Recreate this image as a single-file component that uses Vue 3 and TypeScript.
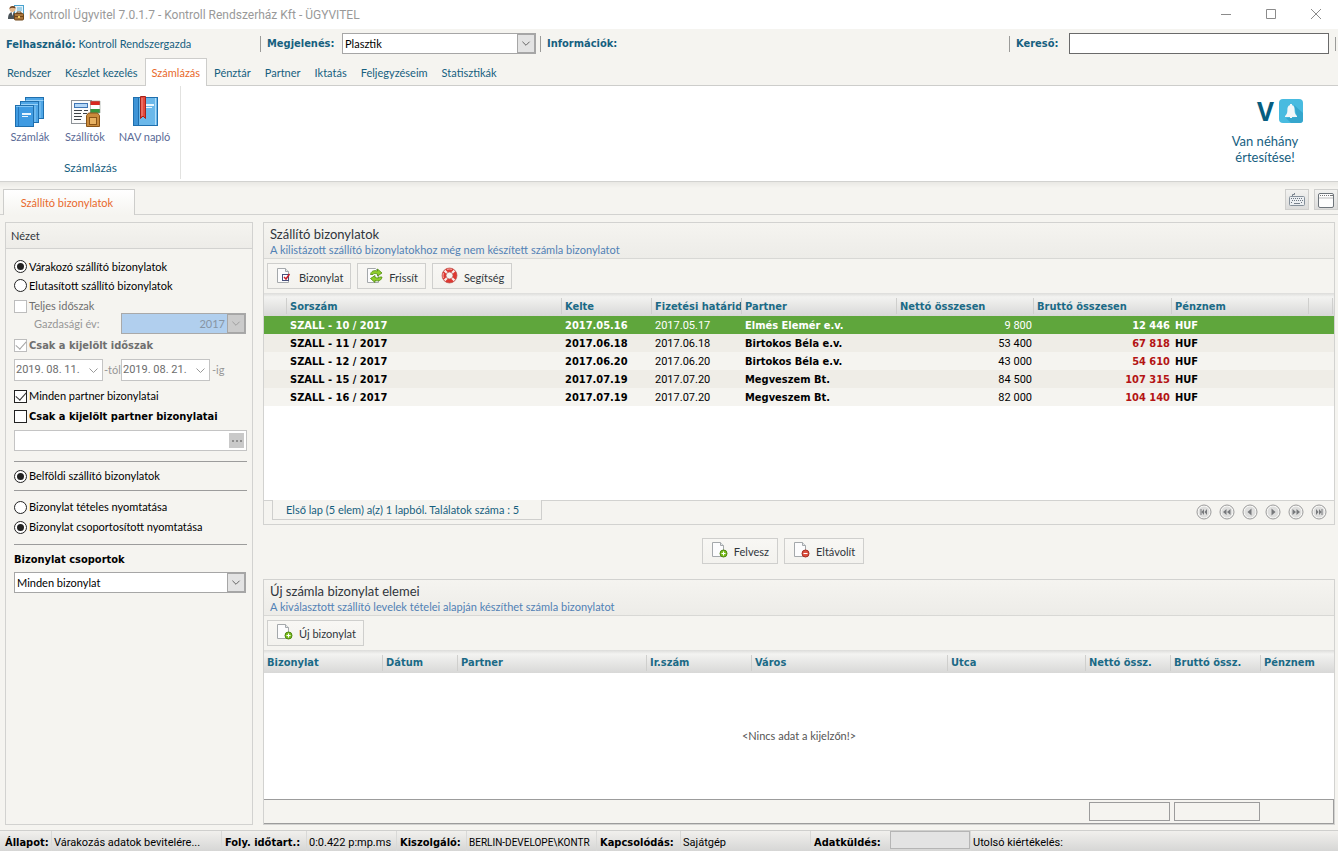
<script setup lang="ts">
import { ref } from 'vue'

interface DeliveryNote {
  serial: string
  issued: string
  due: string
  partner: string
  net: string
  gross: string
  currency: string
}

const menuTabs: string[] = ['Rendszer', 'Készlet kezelés', 'Számlázás', 'Pénztár', 'Partner', 'Iktatás', 'Feljegyzéseim', 'Statisztikák']
const activeTab = ref('Számlázás')
const theme = ref('Plasztik')
const search = ref('')

const listMode = ref('waiting')
const wholePeriod = ref(false)
const chosenPeriod = ref(true)
const allPartners = ref(true)
const chosenPartner = ref(false)
const origin = ref('domestic')
const printMode = ref('grouped')
const dateFrom = ref('2019. 08. 11.')
const dateTo = ref('2019. 08. 21.')
const partnerName = ref('')

const notes: DeliveryNote[] = [
  { serial: 'SZALL - 10 / 2017', issued: '2017.05.16', due: '2017.05.17', partner: 'Elmés Elemér e.v.', net: '9 800', gross: '12 446', currency: 'HUF' },
  { serial: 'SZALL - 11 / 2017', issued: '2017.06.18', due: '2017.06.18', partner: 'Birtokos Béla e.v.', net: '53 400', gross: '67 818', currency: 'HUF' },
  { serial: 'SZALL - 12 / 2017', issued: '2017.06.20', due: '2017.06.20', partner: 'Birtokos Béla e.v.', net: '43 000', gross: '54 610', currency: 'HUF' },
  { serial: 'SZALL - 15 / 2017', issued: '2017.07.19', due: '2017.07.20', partner: 'Megveszem Bt.', net: '84 500', gross: '107 315', currency: 'HUF' },
  { serial: 'SZALL - 16 / 2017', issued: '2017.07.19', due: '2017.07.20', partner: 'Megveszem Bt.', net: '82 000', gross: '104 140', currency: 'HUF' },
]
const selectedRow = ref(0)

const itemColumns: string[] = ['Bizonylat', 'Dátum', 'Partner', 'Ir.szám', 'Város', 'Utca', 'Nettó össz.', 'Bruttó össz.', 'Pénznem']

const pagerButtons = [
  { label: 'Első', path: 'M4.500 5h1v6h-1zM8 5v6L5.500 8zM11 5v6L8.500 8z' },
  { label: 'Vissza lapoz', path: 'M7.500 5v6L4 8zM11.500 5v6L8 8z' },
  { label: 'Előző', path: 'M9.500 4.500v7L5.500 8z' },
  { label: 'Következő', path: 'M6.500 4.500v7l4-3.500z' },
  { label: 'Előre lapoz', path: 'M4.500 5v6L8 8zM8.500 5v6L12 8z' },
  { label: 'Utolsó', path: 'M5 5v6l2.500-3zM8 5v6l2.500-3zM10.500 5h1v6h-1z' },
]
</script>

<template>
  <div class="app">
    <header class="titlebar">
      <svg class="app-icon" viewBox="0 0 16 16" aria-hidden="true">
        <rect x="6.500" y=".5" width="9" height="10" fill="#e8f3fa" stroke="#4aa3cf" />
        <path d="M9 3h5M9 5h5" stroke="#5bb0d6" />
        <circle cx="4.500" cy="4" r="3" fill="#e8b98a" />
        <path d="M1.500 4C1 .5 8 0 7.500 3.500 5 2.500 3 2.500 1.500 4z" fill="#6b4424" />
        <path d="M0 14c0-5 2-7 4.500-7S8 9 8 14z" fill="#4b5359" />
        <path d="M3.500 7h2l-1 4z" fill="#fff" />
        <rect x="6.500" y="8.500" width="9" height="6.500" rx="1" fill="#a9743b" stroke="#6f4718" />
        <path d="M9 8.500V7h4v1.500M7 11.500h8" stroke="#6f4718" fill="none" />
        <rect x="10" y="11" width="2" height="2" fill="#f2cc5e" />
      </svg>
      <h1>Kontroll Ügyvitel 7.0.1.7 - Kontroll Rendszerház Kft - ÜGYVITEL</h1>
      <div class="window-buttons">
        <button type="button" aria-label="Kis méret"><svg viewBox="0 0 12 12"><path d="M1 6.500h10" /></svg></button>
        <button type="button" aria-label="Teljes méret"><svg viewBox="0 0 12 12"><path d="M1.500 1.500h9v9h-9z" /></svg></button>
        <button type="button" aria-label="Bezárás"><svg viewBox="0 0 12 12"><path d="M1 1l10 10M11 1L1 11" /></svg></button>
      </div>
    </header>

    <div class="infobar">
      <div class="info-user"><b>Felhasználó:</b> <span>Kontroll Rendszergazda</span></div>
      <label class="divided info-theme" for="theme">Megjelenés:</label>
      <div class="combo theme-combo">
        <select id="theme" v-model="theme"><option>Plasztik</option></select>
        <svg viewBox="0 0 17 19" aria-hidden="true"><path d="M4.500 7.500l4 4 4-4" /></svg>
      </div>
      <b class="divided info-news">Információk:</b>
      <label class="divided info-search" for="search">Kereső:</label>
      <input id="search" v-model="search" class="search" type="text" />
      <span class="end-mark"></span>
    </div>

    <nav class="menu">
      <button v-for="tab in menuTabs" :key="tab" type="button" :class="{ active: tab === activeTab }" @click="activeTab = tab">{{ tab }}</button>
    </nav>

    <section class="ribbon">
      <div class="ribbon-group">
        <div class="ribbon-items">
          <button type="button" class="item-a">
            <svg viewBox="0 0 32 32" aria-hidden="true">
              <g stroke="#1f6fae">
                <rect x="11.500" y="1.500" width="18" height="21" fill="#4fa6e6" />
                <path d="M11.500 4.500h18" stroke="#9ad2f8" /><path d="M26 6v16" stroke="#8bcaf6" />
                <rect x="6.500" y="5.500" width="18" height="21" fill="#4fa6e6" />
                <path d="M7 8.500h17" stroke="#9ad2f8" /><path d="M21 10v16" stroke="#8bcaf6" />
                <rect x="1.500" y="9.500" width="18" height="21" fill="#3f9be2" />
                <path d="M4.500 10v20" stroke="#2678bd" /><path d="M2 10.500h17" stroke="#83c7f6" />
              </g>
              <path d="M8 17h9v2H8zM8 20h6v1H8z" fill="#e9f6ff" />
            </svg>
            Számlák
          </button>
          <button type="button" class="item-b">
            <svg viewBox="0 0 32 32" aria-hidden="true">
              <rect x="2.500" y="4.500" width="20" height="23" fill="#fbfbfb" stroke="#8d9297" />
              <rect x="5.500" y="7.500" width="13" height="4" fill="#b4d7f7" stroke="#4076b4" />
              <path d="M5 14.500h8M5 17.500h7M5 20.500h8M5 23.500h7M15 14.500h4M14 17.500h4" stroke="#3e4348" />
              <path d="M21 5h10v4H21z" fill="#d8281f" /><path d="M21 9h10v4H21z" fill="#fff" /><path d="M21 13h10v4H21z" fill="#35963f" />
              <path d="M21.500 5v12h9.500V5z" fill="none" stroke="#8b958b" stroke-width=".6" />
              <path d="M17.500 19.500l2-2.500h9l2 2.500v11h-13z" fill="#c98b3c" stroke="#8a5518" />
              <rect x="20.500" y="21.500" width="7" height="7" fill="#e8b263" stroke="#8a5518" />
            </svg>
            Szállítók
          </button>
          <button type="button" class="item-c">
            <svg viewBox="0 0 32 32" aria-hidden="true">
              <rect x="4.500" y="1.500" width="24" height="28" fill="#6bb8ea" stroke="#1f6fae" />
              <path d="M5 2h4v27H5z" fill="#3f94d6" /><path d="M9.500 2v27" stroke="#1f6fae" /><path d="M26.500 2v27" stroke="#b3def9" />
              <path d="M17 8h8v2h-8zM17 11h6v1h-6z" fill="#e9f6ff" />
              <path d="M11.500.5h5v22l-2.500-2.500-2.500 2.500z" fill="#e2493d" stroke="#a82219" />
              <path d="M13 2v18" stroke="#f59086" />
            </svg>
            NAV napló
          </button>
        </div>
        <div class="ribbon-caption">Számlázás</div>
      </div>
      <div class="notice">
        <div class="notice-icons">
          <strong>V</strong>
          <svg viewBox="0 0 24 24" aria-hidden="true">
            <rect width="24" height="24" rx="4" fill="#48bbe0" />
            <path d="M18 18l-3-12 9 8v7a3 3 0 0 1-3 3h-9l-5-5z" fill="#35a6cd" />
            <path d="M12 6c2.800 0 3.600 2.200 3.600 5 0 3.500.9 4.500 2.400 6v1H6v-1c1.500-1.500 2.400-2.500 2.400-6 0-2.800.8-5 3.600-5z" fill="#f2f7f9" />
            <path d="M11 5.500h2M11 18.500h2" stroke="#f2f7f9" />
          </svg>
        </div>
        <p>Van néhány<br />értesítése!</p>
      </div>
    </section>

    <div class="doc-tabs">
      <button type="button" class="doc-tab">Szállító bizonylatok</button>
      <div class="doc-tools">
        <button type="button" aria-label="Billentyűzet">
          <svg viewBox="0 0 18 16" aria-hidden="true">
            <rect x="1.500" y="4.500" width="15" height="9" rx="1" fill="#eceff2" stroke="#85909b" />
            <path d="M4.500 4V2.500h2V1" stroke="#77818c" fill="none" />
            <path d="M3 6.500h12M4 8.500h11M3 10.500h2M13 10.500h2" stroke="#6d7883" stroke-dasharray="1 1" /><path d="M6 11.500h6" stroke="#77818c" />
          </svg>
        </button>
        <button type="button" aria-label="Ablak">
          <svg viewBox="0 0 18 16" aria-hidden="true">
            <rect x="1.500" y="1.500" width="15" height="14" rx="1.500" fill="#fdfdfd" stroke="#6d747a" />
            <path d="M3 3.500h9" stroke="#777" stroke-dasharray="1 1" /><path d="M13 3.500h3" stroke="#777" /><path d="M2 6h14" stroke="#ddd" stroke-width="2" />
          </svg>
        </button>
      </div>
    </div>

    <main class="workspace">
      <aside class="panel side">
        <h2>Nézet</h2>
        <form class="filters" @submit.prevent>
          <label class="choice h19"><input v-model="listMode" type="radio" name="list" value="waiting" />Várakozó szállító bizonylatok</label>
          <label class="choice h19"><input v-model="listMode" type="radio" name="list" value="rejected" />Elutasított szállító bizonylatok</label>
          <label class="choice whole muted"><input v-model="wholePeriod" type="checkbox" disabled />Teljes időszak</label>
          <div class="year-row">
            <label for="year">Gazdasági év:</label>
            <div class="combo year-combo">
              <select id="year" disabled><option>2017</option></select>
              <svg viewBox="0 0 17 19" aria-hidden="true"><path d="M4.500 7.500l4 4 4-4" /></svg>
            </div>
          </div>
          <label class="choice period muted bold"><input v-model="chosenPeriod" type="checkbox" disabled />Csak a kijelölt időszak</label>
          <div class="dates">
            <div class="date"><input v-model="dateFrom" type="text" aria-label="Kezdő dátum" disabled /><svg viewBox="0 0 17 19" aria-hidden="true"><path d="M4.500 7.500l4 4 4-4" /></svg></div>
            <span class="suffix">-tól</span>
            <div class="date"><input v-model="dateTo" type="text" aria-label="Záró dátum" disabled /><svg viewBox="0 0 17 19" aria-hidden="true"><path d="M4.500 7.500l4 4 4-4" /></svg></div>
            <span>-ig</span>
          </div>
          <label class="choice partners"><input v-model="allPartners" type="checkbox" />Minden partner bizonylatai</label>
          <label class="choice bold h21"><input v-model="chosenPartner" type="checkbox" />Csak a kijelölt partner bizonylatai</label>
          <div class="picker">
            <input v-model="partnerName" type="text" aria-label="Partner" />
            <button type="button" aria-label="Partner választása"><i></i><i></i><i></i></button>
          </div>
          <hr class="first" />
          <label class="choice h28"><input v-model="origin" type="radio" name="origin" value="domestic" />Belföldi szállító bizonylatok</label>
          <hr />
          <label class="choice h20 spaced"><input v-model="printMode" type="radio" name="print" value="detailed" />Bizonylat tételes nyomtatása</label>
          <label class="choice h20"><input v-model="printMode" type="radio" name="print" value="grouped" />Bizonylat csoportosított nyomtatása</label>
          <hr class="last" />
          <label class="group-label" for="group">Bizonylat csoportok</label>
          <div class="combo group-combo">
            <select id="group"><option>Minden bizonylat</option></select>
            <svg viewBox="0 0 17 19" aria-hidden="true"><path d="M4.500 7.500l4 4 4-4" /></svg>
          </div>
        </form>
      </aside>

      <div class="content">
        <section class="panel">
          <header class="panel-head">
            <h2>Szállító bizonylatok</h2>
            <p>A kilistázott szállító bizonylatokhoz még nem készített számla bizonylatot</p>
          </header>
          <div class="toolbar">
            <button type="button">
              <svg viewBox="0 0 18 18" aria-hidden="true">
                <path d="M1.500 1.500h8l3 3v11h-11z" fill="#fcfcfd" stroke="#a4a8ab" /><path d="M9.500 1.500v3h3" fill="#e3e7ea" stroke="#a4a8ab" />
                <rect x="6.500" y="7.500" width="6" height="6" fill="#fff" stroke="#48517c" /><path d="M8 10l2 2 3.500-5" fill="none" stroke="#c71f2d" stroke-width="1.500" />
              </svg>
              Bizonylat
            </button>
            <button type="button">
              <svg viewBox="0 0 18 18" aria-hidden="true">
                <path d="M1.500 1.500h8l3 3v11h-11z" fill="#fcfcfd" stroke="#a4a8ab" />
                <g fill="#8fce2b" stroke="#4f8a0c" stroke-width=".8">
                  <path d="M4.500 7.500C5 4 8 3 11.500 4V2l4.500 4-4.500 3V7C9 6.200 7.500 6.500 7 7.500z" />
                  <path d="M16 10c-.5 3.500-3.500 4.500-7 3.500v2l-4.500-4L9 8.500v2c2.500.8 4 .5 4.500-.5z" />
                </g>
              </svg>
              Frissít
            </button>
            <button type="button">
              <svg viewBox="0 0 18 18" aria-hidden="true">
                <circle cx="8.500" cy="8.500" r="5.500" fill="none" stroke="#df3831" stroke-width="4" />
                <path d="M3.500 3.500l2.800 2.800M13.500 3.500l-2.800 2.800M3.500 13.500l2.800-2.800M13.500 13.500l-2.800-2.800" stroke="#fbe9e8" stroke-width="2.200" />
                <circle cx="8.500" cy="8.500" r="7.500" fill="none" stroke="#b5544f" stroke-width=".7" /><circle cx="8.500" cy="8.500" r="3.500" fill="none" stroke="#b5544f" stroke-width=".7" />
                <path d="M6 2.500q2.500-1 5 0M2.500 6q-1 2.500 0 5" fill="none" stroke="#f7a09b" stroke-width="1.200" />
              </svg>
              Segítség
            </button>
          </div>
          <div class="grid-area">
            <table>
              <colgroup><col class="w22" /><col /><col class="w90" /><col class="w90" /><col class="w155" /><col class="w137" /><col class="w138" /><col class="w137" /><col class="w24" /><col class="w2" /></colgroup>
              <thead>
                <tr><th></th><th>Sorszám</th><th>Kelte</th><th>Fizetési határid</th><th>Partner</th><th>Nettó összesen</th><th>Bruttó összesen</th><th>Pénznem</th><th></th><th></th></tr>
              </thead>
              <tbody>
                <tr v-for="(note, i) in notes" :key="note.serial" :class="{ selected: i === selectedRow }" @click="selectedRow = i">
                  <td></td>
                  <td class="bold">{{ note.serial }}</td>
                  <td class="bold">{{ note.issued }}</td>
                  <td>{{ note.due }}</td>
                  <td class="bold">{{ note.partner }}</td>
                  <td class="num">{{ note.net }}</td>
                  <td class="num bold gross">{{ note.gross }}</td>
                  <td class="bold">{{ note.currency }}</td>
                  <td></td>
                  <td></td>
                </tr>
              </tbody>
            </table>
          </div>
          <footer class="pager">
            <span class="pager-info">Első lap (5 elem) a(z) 1 lapból. Találatok száma : 5</span>
            <div class="pager-buttons">
              <button v-for="b in pagerButtons" :key="b.label" type="button" :aria-label="b.label">
                <svg viewBox="0 0 16 16" aria-hidden="true">
                  <circle cx="8" cy="8" r="7" fill="#f8f8f6" stroke="#9a9a9a" /><circle cx="8" cy="8" r="5.500" fill="#dededd" />
                  <path :d="b.path" fill="#77797c" />
                </svg>
              </button>
            </div>
          </footer>
        </section>

        <div class="transfer">
          <button type="button" class="tool">
            <svg viewBox="0 0 18 18" aria-hidden="true">
              <path d="M1.500 1.500h8l3 3v11h-11z" fill="#fcfcfd" stroke="#a4a8ab" /><path d="M9.500 1.500v3h3" fill="#e3e7ea" stroke="#a4a8ab" />
              <circle cx="12.500" cy="12.500" r="3.500" fill="#7cc01d" stroke="#4d8410" /><path d="M10.500 12.500h4M12.500 10.500v4" stroke="#fff" />
            </svg>
            Felvesz
          </button>
          <button type="button" class="tool">
            <svg viewBox="0 0 18 18" aria-hidden="true">
              <path d="M1.500 1.500h8l3 3v11h-11z" fill="#fcfcfd" stroke="#a4a8ab" /><path d="M9.500 1.500v3h3" fill="#e3e7ea" stroke="#a4a8ab" />
              <circle cx="12.500" cy="12.500" r="3.500" fill="#dd5040" stroke="#a32b1f" /><path d="M10.500 12.500h4" stroke="#fff" />
            </svg>
            Eltávolít
          </button>
        </div>

        <section class="panel">
          <header class="panel-head">
            <h2>Új számla bizonylat elemei</h2>
            <p>A kiválasztott szállító levelek tételei alapján készíthet számla bizonylatot</p>
          </header>
          <div class="toolbar">
            <button type="button">
              <svg viewBox="0 0 18 18" aria-hidden="true">
                <path d="M1.500 1.500h8l3 3v11h-11z" fill="#fcfcfd" stroke="#a4a8ab" /><path d="M9.500 1.500v3h3" fill="#e3e7ea" stroke="#a4a8ab" />
                <circle cx="12.500" cy="12.500" r="3.500" fill="#7cc01d" stroke="#4d8410" /><path d="M10.500 12.500h4M12.500 10.500v4" stroke="#fff" />
              </svg>
              Új bizonylat
            </button>
          </div>
          <div class="grid-area empty">
            <table class="items">
              <colgroup><col class="w118" /><col class="w75" /><col /><col class="w105" /><col class="w196" /><col class="w138" /><col class="w85" /><col class="w90" /><col class="w74" /></colgroup>
              <thead>
                <tr><th v-for="c in itemColumns" :key="c">{{ c }}</th></tr>
              </thead>
            </table>
            <p>&lt;Nincs adat a kijelzőn!&gt;</p>
          </div>
          <footer class="totals"><output class="net" aria-label="Nettó össz."></output><output class="sum" aria-label="Bruttó össz."></output></footer>
        </section>
      </div>
    </main>

    <footer class="statusbar">
      <b>Állapot:</b><span>Várakozás adatok bevitelére...</span>
      <b>Foly. időtart.:</b><span>0:0.422 p:mp.ms</span>
      <b>Kiszolgáló:</b><span class="server">BERLIN-DEVELOPE\KONTR</span>
      <b>Kapcsolódás:</b><span>Sajátgép</span>
      <b class="sending">Adatküldés:<i></i></b><span>Utolsó kiértékelés:</span>
    </footer>
  </div>
</template>

<style>
body {
  margin: 0;
}
</style>

<style scoped>
* {
  box-sizing: border-box;
}
.app {
  display: flex;
  flex-direction: column;
  height: 100vh;
  min-height: 680px;
  overflow: hidden;
  background: #f5f4f0;
  color: #000;
  font: 11px/14px Lato, Roboto, sans-serif;
}
b, label.divided, .bold, th, .group-label {
  font-family: 'DejaVu Sans Condensed', 'DejaVu Sans', sans-serif;
  font-weight: 700;
}
button, input, select {
  margin: 0;
  padding: 0;
  border: 0;
  border-radius: 0;
  background: none;
  color: inherit;
  font: inherit;
}
h1, h2, p {
  margin: 0;
  font-weight: 400;
}
svg {
  display: block;
}

.titlebar {
  display: flex;
  align-items: center;
  flex: none;
  height: 29px;
  padding-left: 8px;
  background: #fff;
  color: #999;
}
.app-icon {
  width: 16px;
  height: 16px;
  margin-bottom: 3px;
}
h1 {
  flex: 1;
  padding-left: 5px;
  font-family: Roboto, sans-serif;
  font-size: 12px;
  line-height: 26px;
}
.window-buttons {
  display: flex;
}
.window-buttons button {
  display: grid;
  place-items: center;
  width: 45px;
  height: 28px;
}
.window-buttons svg {
  width: 12px;
  height: 12px;
  margin-bottom: 2px;
  fill: none;
  stroke: #8b8b8b;
}

.infobar {
  display: flex;
  align-items: center;
  flex: none;
  height: 29px;
  padding-left: 6px;
  color: #16607f;
  line-height: 15px;
}
.info-user {
  width: 254px;
}
.divided {
  padding-left: 6px;
  border-left: 1px solid #9b9b99;
  line-height: 16px;
}
.info-theme {
  width: 82px;
}
.info-news {
  flex: 1;
  margin-left: 4px;
}
.info-search {
  width: 60px;
}
.search {
  width: 260px;
  height: 21px;
  border: 1px solid #6a6a6a;
  background: #fff;
}
.end-mark {
  width: 3px;
  height: 14px;
  margin-left: 6px;
  border-left: 1px solid #9b9b99;
}

.combo {
  display: grid;
  grid-template-columns: 1fr 18px;
  height: 21px;
  border: 1px solid #a6a6a6;
  background: #fff;
  color: #000;
}
.combo select {
  grid-area: 1 / 1 / 2 / 3;
  width: 100%;
  height: 19px;
  padding-left: 2px;
  appearance: none;
}
.combo svg {
  grid-area: 1 / 2;
  width: 18px;
  height: 19px;
  border: 1px solid #a6a6a6;
  background: #e3e3e3;
  pointer-events: none;
}
.combo path, .date path {
  fill: none;
  stroke: #555;
}
.theme-combo {
  width: 194px;
}

.menu {
  display: flex;
  flex: none;
  height: 28px;
  border-bottom: 1px solid #cdcdcb;
}
.menu button {
  height: 28px;
  padding: 0 6px;
  border: 1px solid transparent;
  border-bottom: 0;
  color: #16607f;
  white-space: nowrap;
}
.menu .active {
  border-color: #cdcdcb;
  background: #fff;
  color: #e8692c;
}

.ribbon {
  display: flex;
  flex: none;
  justify-content: space-between;
  height: 96px;
  padding-right: 35px;
  border-bottom: 1px solid #d2d2d0;
  background: #fff;
}
.ribbon-group {
  display: flex;
  flex-direction: column;
  width: 181px;
  margin-bottom: 2px;
  padding-left: 1px;
  border-right: 1px solid #e2e2e0;
}
.ribbon-items {
  display: flex;
  height: 74px;
  padding-top: 10px;
}
.ribbon-items button {
  display: flex;
  flex-direction: column;
  align-items: center;
  gap: 2px;
  height: 50px;
  color: #5a6a96;
}
.ribbon-items svg {
  width: 32px;
  height: 32px;
}
.item-a {
  width: 58px;
}
.item-b {
  width: 52px;
}
.item-c {
  width: 67px;
}
.ribbon-caption {
  color: #16607f;
  font-size: 12px;
  line-height: 16px;
  text-align: center;
}
.notice {
  width: 76px;
  padding-top: 13px;
  color: #16607f;
  font-size: 13px;
  line-height: 16px;
  text-align: center;
}
.notice-icons {
  display: flex;
  justify-content: flex-end;
  align-items: center;
  gap: 5px;
  margin-bottom: 10px;
}
.notice strong {
  color: #065d80;
  font-family: 'Noto Sans', sans-serif;
  font-size: 26px;
  line-height: 24px;
}
.notice svg {
  width: 24px;
  height: 24px;
}

.doc-tabs {
  display: flex;
  flex: none;
  justify-content: space-between;
  height: 33px;
  padding: 7px 0 0 3px;
  border-bottom: 1px solid #d2d2d0;
  background: linear-gradient(#e9e8e4, #f5f4f0 6px);
}
.doc-tab {
  width: 132px;
  height: 26px;
  padding-right: 4px;
  border: 1px solid #cdcdcb;
  border-bottom: 0;
  background: linear-gradient(#fff, #f5f4f0);
  color: #e8692c;
}
.doc-tools {
  display: flex;
  gap: 5px;
}
.doc-tools button {
  display: grid;
  place-items: center;
  width: 24px;
  height: 21px;
  border: 1px solid #cfcfcd;
  background: linear-gradient(#f2f2f0, #dcdcdb);
}
.doc-tools svg {
  width: 18px;
  height: 16px;
}

.workspace {
  display: grid;
  flex: 1;
  grid-template-columns: 248px minmax(0, 1fr);
  gap: 10px;
  min-height: 0;
  padding: 7px 3px 5px 5px;
}
.panel {
  display: flex;
  flex-direction: column;
  min-height: 0;
  border: 1px solid #d2d2d0;
}
.side h2 {
  height: 26px;
  padding-left: 5px;
  border-bottom: 1px solid #d2d2d0;
  background: linear-gradient(#f5f4f0, #edece8);
  color: #30363c;
  font-size: 11px;
  line-height: 26px;
}
.filters {
  display: flex;
  flex-direction: column;
  padding: 8px 5px 0 8px;
}
.choice {
  display: flex;
  align-items: center;
  gap: 2px;
  white-space: nowrap;
}
.choice input {
  display: grid;
  flex: none;
  place-items: center;
  width: 13px;
  height: 13px;
  border: 1px solid #222;
  background: #fff;
  appearance: none;
}
.choice input[type='radio'] {
  border-radius: 50%;
}
.choice input[type='radio']:checked::before {
  width: 7px;
  height: 7px;
  border-radius: 50%;
  background: #222;
  content: '';
}
.choice input[type='checkbox']:checked::before {
  width: 9px;
  height: 5px;
  margin-bottom: 3px;
  border: solid #333;
  border-width: 0 0 1px 1px;
  transform: rotate(-48deg);
  content: '';
}
.choice input:disabled {
  border-color: #bdbdbd;
}
.choice input[type='checkbox']:disabled::before {
  border-color: #a5a5a5;
}
.muted {
  color: #6f6f6f;
}
.h19 {
  height: 19px;
}
.h20 {
  height: 20px;
}
.h21 {
  height: 21px;
}
.h28 {
  height: 28px;
}
.whole {
  height: 18px;
  padding-top: 4px;
}
.year-row {
  display: flex;
  justify-content: space-between;
  align-items: center;
  padding: 0 1px 0 20px;
  color: #979797;
}
.year-combo {
  width: 125px;
  border-color: #a9a9a9;
  background: #b1cfee;
  color: #8795a5;
}
.year-combo select {
  padding-right: 20px;
  opacity: 1;
  text-align-last: right;
}
.year-combo svg {
  background: #cbcbcb;
}
.year-combo path, .date path {
  stroke: #999;
}
.period {
  height: 23px;
}
.dates {
  display: flex;
  align-items: center;
  height: 22px;
  margin-top: 2px;
  color: #979797;
  white-space: nowrap;
}
.date {
  display: flex;
  flex: none;
  align-items: center;
  width: 89px;
  height: 22px;
  border: 1px solid #c4c4c4;
  background: #fff;
  color: #6d6d6d;
}
.date input {
  width: 70px;
  padding-left: 1px;
  font-family: Roboto, sans-serif;
}
.date svg {
  width: 17px;
  height: 19px;
}
.suffix {
  flex: none;
  width: 18px;
  padding-left: 1px;
}
.dates > span:last-child {
  padding-left: 2px;
}
.partners {
  height: 20px;
  margin-top: 5px;
}
.picker {
  display: flex;
  align-items: center;
  height: 21px;
  margin-top: 3px;
  padding-right: 2px;
  border: 1px solid #c4c4c4;
  background: #fff;
}
.picker input {
  flex: 1;
  min-width: 0;
}
.picker button {
  display: flex;
  justify-content: center;
  align-items: center;
  gap: 2px;
  width: 15px;
  height: 15px;
  background: #c9c9c9;
}
.picker i {
  width: 2px;
  height: 2px;
  background: #8f8f8f;
}
hr {
  width: 100%;
  height: 1px;
  margin: 0;
  border: 0;
  background: #9c9c9c;
}
.first {
  margin-top: 10px;
}
.last {
  margin-top: 7px;
}
.spaced {
  margin-top: 6px;
}
.group-label {
  margin-top: 5px;
  line-height: 20px;
}
.group-combo {
  margin: 2px 1px 0 0;
}

.content {
  display: grid;
  grid-template-rows: minmax(0, 16fr) auto minmax(0, 13fr);
  min-height: 0;
}
.panel-head {
  flex: none;
  height: 36px;
  padding: 2px 6px 0;
  border-bottom: 1px solid #d8d8d5;
  background: linear-gradient(#f5f4f0, #edece8);
  color: #5181b5;
}
.panel-head h2 {
  color: #30363c;
  font-size: 13px;
  line-height: 18px;
}
.panel-head p {
  line-height: 14px;
}
.toolbar {
  display: flex;
  flex: none;
  gap: 6px;
  padding: 4px 3px;
}
.toolbar button, .tool {
  display: flex;
  align-items: center;
  gap: 5px;
  height: 26px;
  padding: 3px 7px 0 8px;
  border: 1px solid #cfcfcd;
  background: linear-gradient(#f8f7f4, #f3f2ee);
  color: #30363c;
  white-space: nowrap;
}
.toolbar svg, .tool svg {
  width: 18px;
  height: 18px;
  margin-bottom: 4px;
}
.grid-area {
  flex: 1;
  min-height: 0;
  overflow: hidden;
  background: #fff;
}
table {
  width: 100%;
  border-collapse: separate;
  border-spacing: 0;
  table-layout: fixed;
}
thead tr {
  background: linear-gradient(#dcdcda, #f3f3f1 4px, #d8d8d7);
}
th {
  height: 23px;
  padding: 4px 0 0 3px;
  overflow: hidden;
  border-left: 1px solid #cdcdcb;
  border-image: linear-gradient(transparent 6px, #cfcfcd 6px, #cfcfcd 20px, transparent 20px) 1;
  color: #1b6a86;
  text-align: left;
  white-space: nowrap;
}
th:first-child {
  padding-left: 3px;
  border: 0;
}
td {
  height: 18px;
  padding: 1px 0 0 4px;
  white-space: nowrap;
}
td:not(.bold) {
  font-family: Roboto, sans-serif;
}
tbody tr {
  background: #f5f4f0;
}
tbody tr:nth-child(even) {
  background: #efede7;
}
.num {
  padding-right: 1px;
  text-align: right;
}
.gross {
  color: #b41414;
}
tbody .selected, .selected .gross {
  background: #5fa63c;
  color: #fff;
}
.w2 { width: 2px; }
.w22 { width: 22px; }
.w24 { width: 24px; }
.w74 { width: 74px; }
.w75 { width: 75px; }
.w85 { width: 85px; }
.w90 { width: 90px; }
.w105 { width: 105px; }
.w118 { width: 118px; }
.w137 { width: 137px; }
.w138 { width: 138px; }
.w155 { width: 155px; }
.w196 { width: 196px; }
.pager {
  display: flex;
  flex: none;
  justify-content: space-between;
  height: 24px;
  padding: 0 7px 0 8px;
  border-top: 1px solid #d2d2d0;
  color: #16607f;
}
.pager-info {
  min-width: 270px;
  height: 20px;
  margin-top: -1px;
  padding: 2px 13px 0;
  border: 1px solid #cfcfcd;
  border-top: 0;
  background: #f5f4f0;
  line-height: 16px;
}
.pager-buttons {
  display: flex;
  align-items: center;
  gap: 7px;
}
.pager-buttons svg {
  width: 16px;
  height: 16px;
}
.transfer {
  display: flex;
  justify-content: center;
  gap: 6px;
  padding: 13px 32px 15px 0;
}
.transfer .tool {
  padding-right: 8px;
}
.empty {
  display: flex;
  flex-direction: column;
}
.empty p {
  flex: 1;
  align-content: center;
  color: #555;
  text-align: center;
}
.totals {
  display: flex;
  flex: none;
  justify-content: flex-end;
  gap: 4px;
  height: 25px;
  padding: 2px 73px 2px 0;
  border: solid #9c9c9c;
  border-width: 1px 1px 1px 0;
}
.totals output {
  height: 19px;
  border: 1px solid #9c9c9c;
}
.net {
  width: 81px;
}
.sum {
  width: 86px;
}

.statusbar {
  display: grid;
  flex: none;
  grid-template-columns: 51px 170px 85px 90px 70px 130px 84px 130px 160px 1fr;
  height: 21px;
  border-top: 1px solid #cfcfcd;
  background: linear-gradient(#f1f0ed, #d6d6d5);
  font-family: Roboto, sans-serif;
  line-height: 24px;
}
.statusbar > * {
  overflow: hidden;
  padding-left: 2px;
  border-left: 1px solid #d9d9d7;
  white-space: nowrap;
}
.statusbar > b {
  padding-left: 3px;
}
.statusbar > .server {
  font-size: 10px;
}
.statusbar > :first-child {
  padding-left: 5px;
  border: 0;
}
.statusbar > .sending {
  display: flex;
  justify-content: space-between;
}
.sending i {
  width: 80px;
  height: 18px;
  border: 1px solid #b5b5b5;
  background: #e3e3e3;
}
</style>
